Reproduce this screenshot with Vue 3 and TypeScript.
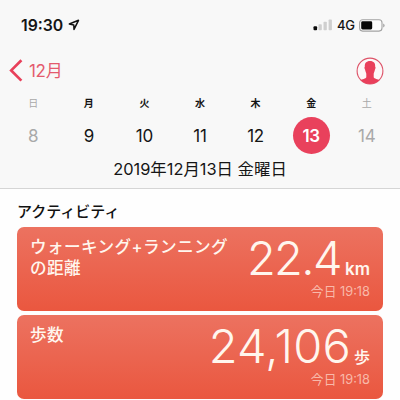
<script setup lang="ts">
interface Day {
  label: string
  date: number
  weekend?: boolean
  selected?: boolean
}

interface Metric {
  title: string[]
  value: string
  unit: string
  kind: string
  time: string
}

const days: Day[] = [
  { label: '日', date: 8, weekend: true },
  { label: '月', date: 9 },
  { label: '火', date: 10 },
  { label: '水', date: 11 },
  { label: '木', date: 12 },
  { label: '金', date: 13, selected: true },
  { label: '土', date: 14, weekend: true },
]

const metrics: Metric[] = [
  { title: ['ウォーキング+ランニング', 'の距離'], value: '22.4', unit: 'km', kind: 'distance', time: '19:18' },
  { title: ['歩数'], value: '24,106', unit: '歩', kind: 'steps', time: '19:18' },
]
</script>

<template>
  <div class="screen">
    <header class="top">
      <div class="status">
        <span class="clock">19:30</span>
        <svg class="arrow" width="12" height="12" viewBox="0 0 12 12">
          <path d="M10.5 1.3 1.3 5 5.8 6 6 10.4Z" fill="none" stroke="#111" stroke-width="1.5" stroke-linejoin="round" />
        </svg>
        <span class="spacer"></span>
        <svg class="signal" width="20" height="12" viewBox="0 0 20 12">
          <rect x="0.5" y="7.3" width="3.6" height="4" rx="1" fill="#0a0a0a" />
          <rect x="5.5" y="5.2" width="3.3" height="6" rx="0.8" fill="#cfcfcf" />
          <rect x="10.5" y="2.8" width="3.3" height="8.4" rx="0.8" fill="#cfcfcf" />
          <rect x="15.6" y="0.4" width="3.3" height="10.8" rx="0.8" fill="#cfcfcf" />
        </svg>
        <span class="network">4G</span>
        <svg class="battery" width="26" height="13" viewBox="0 0 26 13">
          <rect x="0.6" y="0.7" width="22.4" height="11.4" rx="3" fill="#fcfcfc" stroke="#a3a3a3" stroke-width="1.1" />
          <rect x="2.2" y="2.3" width="11" height="8.2" rx="1.4" fill="#050505" />
          <path d="M24.2 4.4Q25.6 5 25.6 6.4T24.2 8.4Z" fill="#a3a3a3" />
        </svg>
      </div>
      <nav class="nav">
        <svg class="chevron" width="14" height="23" viewBox="0 0 14 23">
          <path d="M12.4 1.2 2.2 11.4 12.4 21.6" fill="none" stroke="#e8405a" stroke-width="2.7" />
        </svg>
        <span class="month">12月</span>
        <span class="spacer"></span>
        <svg class="profile" width="28" height="28" viewBox="0 0 28 28">
          <circle cx="14" cy="14" r="12.9" fill="#fdf7f8" stroke="#dd5368" stroke-width="1.1" />
          <path d="M14 4.1C10.3 4.1 8.5 6.3 8.8 9.8C8.2 10.2 8.4 11.7 9.1 12.8C9.4 14.8 10.1 15.8 10.3 16.7V20.2C9.9 21.8 6 22.1 4.5 23Q8.4 26.9 14 26.9T23.5 23C22 22.1 18.1 21.8 17.7 20.2V16.7C17.9 15.8 18.6 14.8 18.9 12.8C19.6 11.7 19.8 10.2 19.2 9.8C19.5 6.3 17.7 4.1 14 4.1Z" fill="#e93f5b" />
        </svg>
      </nav>
      <div class="week">
        <div v-for="d in days" :key="d.date" class="day" :class="{ weekend: d.weekend, selected: d.selected }">
          <span class="weekday">{{ d.label }}</span>
          <span class="date">{{ d.date }}</span>
        </div>
      </div>
      <div class="full-date">2019年12月13日 金曜日</div>
    </header>
    <main class="content">
      <h2 class="heading">アクティビティ</h2>
      <section v-for="m in metrics" :key="m.kind" class="card" :class="m.kind">
        <div class="title"><div v-for="line in m.title" :key="line">{{ line }}</div></div>
        <div class="reading">
          <div class="amount"><span class="value">{{ m.value }}</span><span class="unit">{{ m.unit }}</span></div>
          <div class="when">今日 {{ m.time }}</div>
        </div>
      </section>
    </main>
  </div>
</template>

<style>
body {
  margin: 0;
  overflow: hidden;
}
</style>

<style scoped>
.screen {
  width: 400px;
  height: 400px;
  overflow: hidden;
  background: #fefefe;
  color: #151515;
  font-family: Inter, "Noto Sans CJK JP", sans-serif;
  white-space: nowrap;
}
.top {
  box-sizing: border-box;
  height: 189px;
  background: #f8f8f8;
  border-bottom: 1px solid #d5d5d5;
}
.status {
  display: flex;
  align-items: center;
  box-sizing: border-box;
  height: 50px;
  padding: 0 15px 0 21px;
}
.clock {
  width: 47px;
  font-size: 15.8px;
  font-weight: 600;
}
.spacer {
  flex: 1;
}
.network {
  width: 19px;
  margin: 0 3px 0 4px;
  font-size: 13px;
  font-weight: 500;
  letter-spacing: -0.4px;
}
.nav {
  display: flex;
  align-items: center;
  box-sizing: border-box;
  height: 41px;
  padding: 0 16px 0 9px;
}
.month {
  margin-left: 6px;
  font-size: 17px;
  line-height: 24px;
  color: #e45a6d;
  letter-spacing: -0.3px;
}
.week {
  display: grid;
  grid-template-columns: repeat(7, 55.6px);
  justify-content: center;
}
.day {
  display: flex;
  flex-direction: column;
  align-items: center;
}
.weekday {
  height: 26px;
  font-size: 10px;
  font-weight: 700;
  line-height: 24px;
}
.date {
  width: 37px;
  height: 37px;
  border-radius: 50%;
  text-align: center;
  font-size: 17px;
  line-height: 38px;
  letter-spacing: -0.2px;
}
.weekend {
  color: #a9a9a9;
}
.weekend .weekday {
  font-weight: 400;
}
.selected .date {
  background: #e9415c;
  color: #fff;
  font-weight: 600;
  letter-spacing: -0.3px;
}
.full-date {
  height: 30px;
  line-height: 30px;
  text-align: center;
  font-size: 16.4px;
}
.content {
  padding: 0 17px;
}
.heading {
  height: 38px;
  margin: 0;
  line-height: 45px;
  font-size: 15px;
  font-weight: 500;
  color: #111;
}
.card {
  display: flex;
  justify-content: space-between;
  box-sizing: border-box;
  height: 84px;
  margin-bottom: 4px;
  padding: 9px 13px 0 13px;
  border-radius: 7px;
  background: linear-gradient(#ec7260, #ea573f);
  color: #fff6ee;
}
.title {
  padding-top: 1px;
  font-size: 16.6px;
  line-height: 21px;
  font-weight: 500;
  letter-spacing: 0.4px;
}
.reading {
  text-align: right;
}
.amount {
  height: 46px;
  line-height: 44px;
}
.value {
  font-size: 47px;
  font-weight: 300;
}
.distance .value {
  letter-spacing: -1.6px;
}
.steps .value {
  letter-spacing: 0.2px;
}
.unit {
  margin-left: 3px;
  font-size: 16px;
  font-weight: 500;
}
.distance .unit {
  margin-left: 4px;
  font-size: 17px;
  font-weight: 600;
}
.when {
  line-height: 20px;
  font-size: 12.8px;
  color: #f8b9aa;
}
</style>
